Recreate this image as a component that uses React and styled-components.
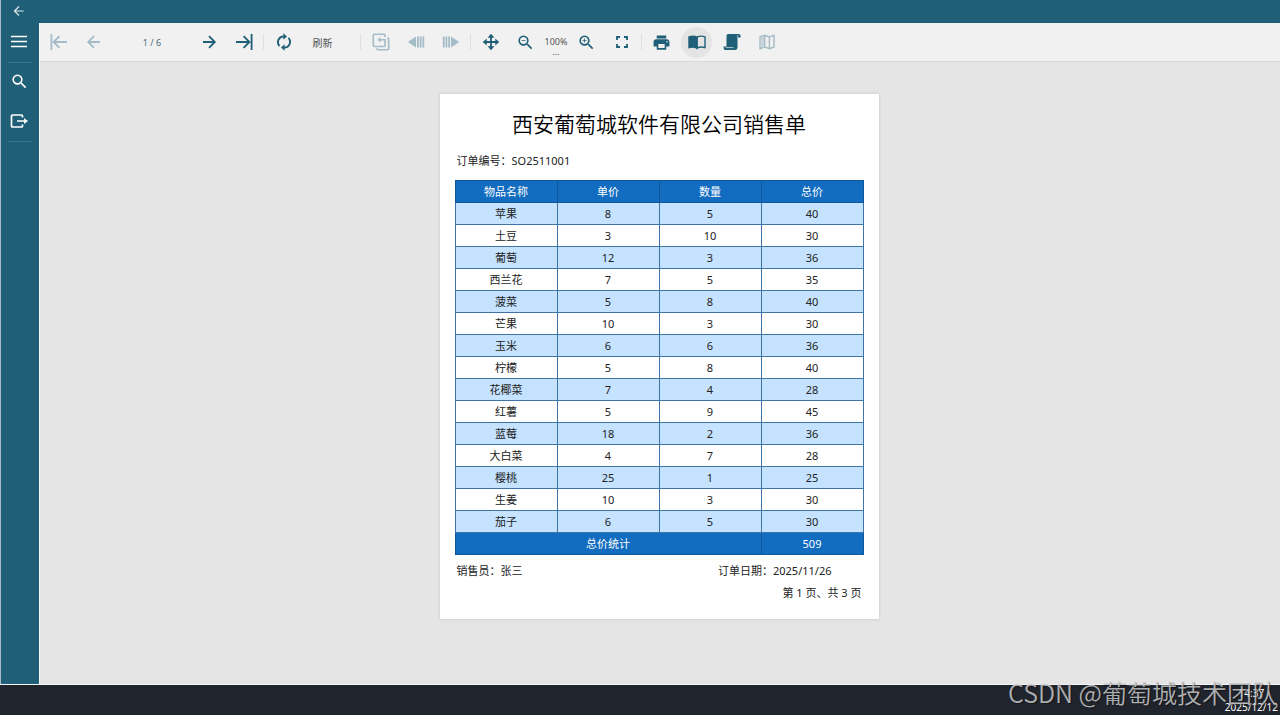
import React, { useState } from "react";
import styled, { createGlobalStyle, css } from "styled-components";
import { MdSearch, MdZoomIn, MdZoomOut, MdPrint } from "react-icons/md";

const columns = ["物品名称", "单价", "数量", "总价"];

const items = [
    ["苹果", 8, 5],
    ["土豆", 3, 10],
    ["葡萄", 12, 3],
    ["西兰花", 7, 5],
    ["菠菜", 5, 8],
    ["芒果", 10, 3],
    ["玉米", 6, 6],
    ["柠檬", 5, 8],
    ["花椰菜", 7, 4],
    ["红薯", 5, 9],
    ["蓝莓", 18, 2],
    ["大白菜", 4, 7],
    ["樱桃", 25, 1],
    ["生姜", 10, 3],
    ["茄子", 6, 5],
];

const total = items.reduce((sum, [, price, count]) => sum + price * count, 0);

const Line = ({ size = 18, width = 2, children }) => (
    <svg
        width={size}
        height={size}
        viewBox="0 0 18 18"
        fill="none"
        stroke="currentColor"
        strokeWidth={width}
        aria-hidden="true"
    >
        {children}
    </svg>
);

const BackIcon = ({ size, width = 1.8 }) => (
    <Line size={size} width={width}>
        <path d="M15 9H3.5M9 3.2L3.2 9L9 14.8" />
    </Line>
);

const NextIcon = () => (
    <Line width={1.8}>
        <path d="M3 9h11.5M9 3.2L14.8 9L9 14.8" />
    </Line>
);

const FirstIcon = () => (
    <Line width={1.8}>
        <path d="M1.4 1v16M17 9H4M9.4 3.2L3.6 9l5.8 5.8" />
    </Line>
);

const LastIcon = () => (
    <Line width={1.8}>
        <path d="M16.6 1v16M1 9h13M8.6 3.2L14.4 9l-5.8 5.8" />
    </Line>
);

const MenuIcon = () => (
    <Line width={1.4}>
        <path d="M1 3.500h16M1 8.500h16M1 13.500h16" />
    </Line>
);

const ExportIcon = () => (
    <Line width={1.7}>
        <path d="M12.5 5.5V4Q12.5 3 11.5 3H2.5Q1.5 3 1.5 4v10q0 1 1 1h9q1 0 1-1v-1.500M7 9h9" />
        <path d="M14 6l4 3l-4 3z" fill="currentColor" stroke="none" />
    </Line>
);

const RefreshIcon = () => (
    <Line width={1.9}>
        <path d="M4.600 13.200A5.700 5.700 0 0 1 8.700 3.500M13.400 4.800A5.700 5.700 0 0 1 9.300 14.500" />
        <path
            d="M8.400 .3l3.600 3.200l-3.600 3.200zM9.600 11.300L6 14.500l3.600 3.200z"
            fill="currentColor"
            stroke="none"
        />
    </Line>
);

const ParentIcon = () => (
    <Line width={1.6}>
        <path d="M13 4V2.200Q13 1.300 12 1.300H2.300Q1.300 1.300 1.300 2.300v10.200q0 1 1 1H12q1 0 1-1V6.800H7.500" />
        <path d="M15.200 5h.5q1 0 1 1v9.800q0 1-1 1H6q-1 0-1-1v-.5" />
        <path d="M8.600 4.200L5.400 6.800l3.200 2.600z" fill="currentColor" stroke="none" />
    </Line>
);

const HistoryBackIcon = () => (
    <Line width={1.8}>
        <path d="M9 3.500v11L.8 9z" fill="currentColor" stroke="none" />
        <path d="M10.900 3.500v11M13.600 3.500v11M16.300 3.500v11" />
    </Line>
);

const HistoryForwardIcon = () => (
    <Line width={1.8}>
        <path d="M9 3.500v11L17.200 9z" fill="currentColor" stroke="none" />
        <path d="M7.100 3.500v11M4.400 3.500v11M1.700 3.500v11" />
    </Line>
);

const MoveIcon = () => (
    <Line width={1.8}>
        <path d="M9 3v12M3 9h12" />
        <path
            d="M9 .8l3.400 3.900H5.600zM9 17.200l3.400-3.900H5.600zM.8 9l3.900-3.400v6.800zM17.200 9l-3.900-3.400v6.800z"
            fill="currentColor"
            stroke="none"
        />
    </Line>
);

const FullscreenIcon = () => (
    <Line width={1.8}>
        <path d="M4 7V4h3M11 4h3v3M14 11v3h-3M7 14H4v-3" />
    </Line>
);

const BookIcon = () => (
    <Line width={1.4}>
        <path
            d="M9 4.200C6.800 3 3.500 3 1 3.800v10.800c2.500-.8 5.800-.7 8 .6z"
            fill="currentColor"
        />
        <path d="M9 4.200c2.200-1.200 5.500-1.200 8-.4v10.800c-2.500-.8-5.800-.7-8 .6z" />
    </Line>
);

const ScrollIcon = () => (
    <Line>
        <path
            d="M5.500 1H15.600C17 1 17.600 2 17.600 3.400V4.600H14.500V14.300C14.500 16 13.500 17 12 17H2.800C1.300 17 .6 16 .6 14.400V13.600H3.500V3.200C3.500 1.800 4.200 1 5.500 1z"
            fill="currentColor"
            stroke="none"
        />
        <path d="M14.400 4.600V3.300q0-1 .8-1M2.500 14.600h8" stroke="#f1f1f1" strokeWidth="0.700" />
    </Line>
);

const GalleyIcon = () => (
    <Line width={1.4}>
        <path d="M2 4l4.700-1.700l4.700 1.700L16 2.300v11.600l-4.600 1.800l-4.700-1.800L2 15.700zM6.700 2.300v11.600M11.400 4v11.700" />
        <path d="M3 4.500l3-1v10l-3 1z" fill="currentColor" stroke="none" opacity="0.500" />
    </Line>
);

export default () => {
    const [page, setPage] = useState("1 / 6");
    return (
        <Screen>
            <GlobalStyle />
            <TitleBar>
                <BackButton aria-label="返回">
                    <BackIcon size={14} width={1.6} />
                </BackButton>
            </TitleBar>
            <Body>
                <Sidebar>
                    <SideButton aria-label="菜单">
                        <MenuIcon />
                    </SideButton>
                    <SideRule />
                    <SideButton aria-label="搜索">
                        <MdSearch size={19} />
                    </SideButton>
                    <SideButton aria-label="导出">
                        <ExportIcon />
                    </SideButton>
                    <SideRule />
                </Sidebar>
                <Main>
                    <Toolbar>
                        <ToolButton disabled aria-label="首页">
                            <FirstIcon />
                        </ToolButton>
                        <ToolButton disabled aria-label="上一页">
                            <BackIcon />
                        </ToolButton>
                        <PageInput
                            aria-label="页码"
                            value={page}
                            onChange={(e) => setPage(e.target.value)}
                        />
                        <ToolButton aria-label="下一页">
                            <NextIcon />
                        </ToolButton>
                        <ToolButton aria-label="末页">
                            <LastIcon />
                        </ToolButton>
                        <Separator />
                        <ToolButton aria-label="重新加载">
                            <RefreshIcon />
                        </ToolButton>
                        <RefreshButton>刷新</RefreshButton>
                        <Separator />
                        <ToolButton disabled aria-label="返回父报表">
                            <ParentIcon />
                        </ToolButton>
                        <ToolButton disabled aria-label="后退">
                            <HistoryBackIcon />
                        </ToolButton>
                        <ToolButton disabled aria-label="前进">
                            <HistoryForwardIcon />
                        </ToolButton>
                        <Separator />
                        <ToolButton aria-label="移动">
                            <MoveIcon />
                        </ToolButton>
                        <ToolButton aria-label="缩小">
                            <MdZoomOut size={19} />
                        </ToolButton>
                        <ZoomButton>
                            <span>100%</span>
                            <span>...</span>
                        </ZoomButton>
                        <ToolButton aria-label="放大">
                            <MdZoomIn size={19} />
                        </ToolButton>
                        <ToolButton aria-label="全屏">
                            <FullscreenIcon />
                        </ToolButton>
                        <Separator />
                        <ToolButton aria-label="打印">
                            <MdPrint size={19} />
                        </ToolButton>
                        <ToolButton $active aria-label="单页">
                            <BookIcon />
                        </ToolButton>
                        <ToolButton aria-label="连续">
                            <ScrollIcon />
                        </ToolButton>
                        <ToolButton disabled aria-label="版面">
                            <GalleyIcon />
                        </ToolButton>
                    </Toolbar>
                    <Viewer>
                        <Paper>
                            <Title>西安葡萄城软件有限公司销售单</Title>
                            <OrderLine>
                                <Field>
                                    <span>订单编号：</span>
                                    <span>SO2511001</span>
                                </Field>
                            </OrderLine>
                            <Table>
                                <thead>
                                    <tr>
                                        {columns.map((name) => (
                                            <th key={name}>{name}</th>
                                        ))}
                                    </tr>
                                </thead>
                                <tbody>
                                    {items.map(([name, price, count]) => (
                                        <tr key={name}>
                                            <td>{name}</td>
                                            <td>{price}</td>
                                            <td>{count}</td>
                                            <td>{price * count}</td>
                                        </tr>
                                    ))}
                                </tbody>
                                <tfoot>
                                    <tr>
                                        <td colSpan={3}>总价统计</td>
                                        <td>{total}</td>
                                    </tr>
                                </tfoot>
                            </Table>
                            <SignLine>
                                <Field>
                                    <span>销售员：</span>
                                    <span>张三</span>
                                </Field>
                                <DateField>
                                    <span>订单日期：</span>
                                    <span>2025/11/26</span>
                                </DateField>
                            </SignLine>
                            <PageCount>第 1 页、共 3 页</PageCount>
                        </Paper>
                    </Viewer>
                </Main>
            </Body>
            <Taskbar>
                <Clock>
                    <span>14:37</span>
                    <span>2025/12/12</span>
                </Clock>
                <Watermark>CSDN @葡萄城技术团队</Watermark>
            </Taskbar>
        </Screen>
    );
};

const GlobalStyle = createGlobalStyle`
    * {
        box-sizing: border-box;
    }

    body {
        margin: 0;
        font-family: "Noto Sans", "Noto Sans CJK SC", sans-serif;
        font-size: 11px;
        color: #222;
    }

    button,
    input {
        margin: 0;
        padding: 0;
        border: 0;
        background: none;
        font: inherit;
        color: inherit;
    }

    svg {
        display: block;
    }
`;

const Screen = styled.div`
    display: flex;
    flex-direction: column;
    min-height: 100vh;
`;

const TitleBar = styled.header`
    height: 23px;
    display: flex;
    background: #205f78;
    border-left: 1px solid #a9bcc5;
    color: #dbe7eb;
`;

const BackButton = styled.button`
    width: 38px;
    padding: 0 2px 1px 0;
    display: flex;
    align-items: center;
    justify-content: center;
`;

const Body = styled.div`
    flex: 1;
    display: flex;
    border-bottom: 1px solid #f4f4f4;
`;

const Sidebar = styled.nav`
    width: 39px;
    display: flex;
    flex-direction: column;
    align-items: center;
    background: #205f78;
    border-left: 1px solid #a9bcc5;
    color: #fff;
`;

const SideButton = styled.button`
    width: 100%;
    height: 39px;
    padding: 0 2px 2px 0;
    display: flex;
    align-items: center;
    justify-content: center;
`;

const SideRule = styled.hr`
    width: 24px;
    height: 1px;
    margin: 0;
    border: 0;
    background: #3d7388;
`;

const Main = styled.main`
    flex: 1;
    min-width: 0;
    display: flex;
    flex-direction: column;
    background: #e5e5e5;
    border-left: 1px solid #f8f8f8;
`;

const Toolbar = styled.div`
    height: 39px;
    display: flex;
    align-items: center;
    padding-left: 1px;
    background: #f1f1f1;
    border-bottom: 1px solid #d8d8d8;
    color: #205f78;
`;

const ToolButton = styled.button`
    width: 35px;
    height: 38px;
    flex-shrink: 0;
    display: flex;
    align-items: center;
    justify-content: center;

    &:disabled {
        color: #a3bcc7;
    }

    ${({ $active }) =>
        $active &&
        css`
            width: 31px;
            height: 31px;
            margin: 0 2px;
            border-radius: 50%;
            background: #e4e4e4;
        `}
`;

const PageInput = styled.input`
    width: 80px;
    height: 24px;
    padding-left: 2px;
    text-align: center;
    font-size: 9px;
    color: #4a6b78;
`;

const Separator = styled.div`
    width: 1px;
    height: 16px;
    margin: 0 2px;
    background: #dedede;
`;

const RefreshButton = styled.button`
    width: 57px;
    height: 38px;
    padding-right: 14px;
    font-size: 10px;
    color: #555;
`;

const ZoomButton = styled.button`
    width: 26px;
    height: 38px;
    padding-top: 14px;
    display: flex;
    flex-direction: column;
    align-items: center;
    font-size: 9px;
    line-height: 10px;
    color: #555;
`;

const Viewer = styled.div`
    flex: 1;
    display: flex;
    justify-content: center;
    align-items: flex-start;
    padding: 32px 2px 32px 0;
`;

const Paper = styled.article`
    width: 439px;
    padding: 14px 15px 15px;
    background: #fff;
    box-shadow: 0 0 3px rgba(0, 0, 0, 0.15);
    color: #222;
`;

const Title = styled.h1`
    margin: 0;
    font-size: 21px;
    line-height: 32px;
    font-weight: 350;
    text-align: center;
    color: #000;
`;

const OrderLine = styled.div`
    padding: 10px 2px 8px;
`;

const Field = styled.div`
    display: flex;
    line-height: 22px;
`;

const Table = styled.table`
    width: 100%;
    table-layout: fixed;
    border-collapse: collapse;
    text-align: center;

    th,
    td {
        height: 22px;
        padding: 0;
        border: 1px solid #3f74a8;
        line-height: 16px;
        font-weight: 400;
    }

    thead,
    tfoot {
        background: #126cc0;
        color: #fff;
    }

    thead th,
    tfoot td {
        border-color: #0f5699;
    }

    tbody tr:nth-child(odd) {
        background: #c5e3ff;
    }
`;

const SignLine = styled.div`
    display: flex;
    justify-content: space-between;
    padding: 5px 2px 0;
`;

const DateField = styled(Field)`
    padding-right: 30px;
`;

const PageCount = styled.div`
    padding-right: 2px;
    line-height: 22px;
    text-align: right;
`;

const Taskbar = styled.footer`
    position: relative;
    height: 30px;
    display: flex;
    justify-content: flex-end;
    background: #20242c;
`;

const Clock = styled.div`
    display: flex;
    flex-direction: column;
    padding: 1px 2px 0 0;
    text-align: center;
    font-size: 10px;
    line-height: 14px;
    color: #fff;
`;

const Watermark = styled.div`
    position: absolute;
    right: 3px;
    top: -5px;
    font-family: "Noto Sans CJK SC", sans-serif;
    font-size: 25px;
    font-weight: 350;
    line-height: 25px;
    white-space: nowrap;
    color: rgba(200, 200, 200, 0.85);
    text-shadow: 1px 1px 1px rgba(0, 0, 0, 0.4);
`;
